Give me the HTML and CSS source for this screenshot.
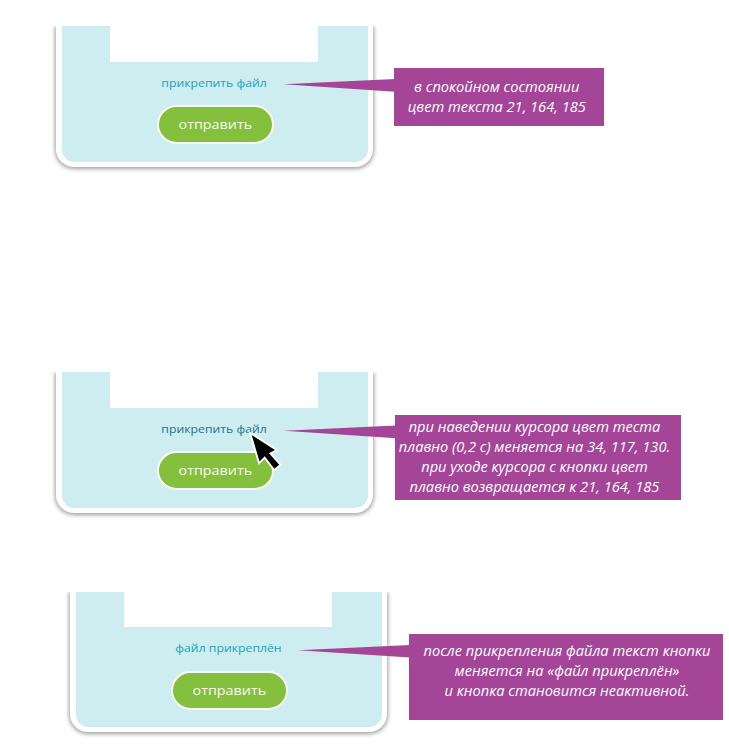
FILE: index.html
```
<!DOCTYPE html>
<html lang="ru">
<head>
<meta charset="utf-8">
<title>Прикрепить файл</title>
<link rel="stylesheet" href="styles.css">
</head>
<body>
<main class="board">
  <section class="scene scene-idle">
    <div class="clip"><div class="card">
      <div class="field"></div>
      <a class="attach"><span>прикрепить файл</span></a>
      <button class="send"><span>отправить</span></button>
    </div></div>
    <div class="note">
      <svg class="tail" width="112" height="14" viewBox="0 0 112 14"><path d="M0 6.3 112 1V13.7Z"/></svg>
      <p>в спокойном состоянии</p>
      <p>цвет текста 21, 164, 185</p>
    </div>
  </section>
  <section class="scene scene-hover">
    <div class="clip"><div class="card">
      <div class="field"></div>
      <a class="attach"><span>прикрепить файл</span></a>
      <button class="send"><span>отправить</span></button>
    </div></div>
    <svg class="cursor" width="36" height="42" viewBox="0 0 36 42"><path d="M2.7 3 26 18 20 21.3 30.3 32.7 25.3 36.7 15.8 24.3 10.5 29.5Z"/></svg>
    <div class="note">
      <svg class="tail" width="112" height="14" viewBox="0 0 112 14"><path d="M0 5.8 112 .6V13.2Z"/></svg>
      <p>при наведении курсора цвет теста</p>
      <p>плавно (0,2 с) меняется на 34, 117, 130.</p>
      <p>при уходе курсора с кнопки цвет</p>
      <p>плавно возвращается к 21, 164, 185</p>
    </div>
  </section>
  <section class="scene scene-done">
    <div class="clip"><div class="card">
      <div class="field"></div>
      <a class="attach"><span>файл прикреплён</span></a>
      <button class="send"><span>отправить</span></button>
    </div></div>
    <div class="note">
      <svg class="tail" width="112" height="14" viewBox="0 0 112 14"><path d="M0 6.3 112 1V13.5Z"/></svg>
      <p>после прикрепления файла текст кнопки</p>
      <p>меняется на «файл прикреплён»</p>
      <p>и кнопка становится неактивной.</p>
    </div>
  </section>
</main>
</body>
</html>
```
FILE: styles.css
```
* { box-sizing: border-box; }
body { margin: 0; background: #fff; overflow: hidden; }
p { margin: 0; }
.board {
  display: grid;
  grid-template-rows: 346px 220px 156px;
  padding-top: 26px;
  width: 729px;
  height: 748px;
}
.scene {
  position: relative;
  display: flex;
  align-items: flex-start;
  padding-left: 52px;
}
.scene-done { padding-left: 66px; }
.clip {
  flex: none;
  width: 326px;
  height: 150px;
  padding: 0 4px;
  overflow: hidden;
}
.card {
  display: flex;
  flex-direction: column;
  align-items: center;
  width: 317px;
  height: 141px;
  background: #ceedf0;
  border: solid #fff;
  border-width: 0 5px 5px 6px;
  border-radius: 0 0 18px 18px;
  box-shadow: 0 1px 4px 1px rgba(0, 0, 0, .38);
}
.scene-done .card { height: 140px; }
.field {
  flex: none;
  width: 208px;
  height: 36px;
  margin-right: 2px;
  background: #fff;
}
.scene-done .field { height: 35px; }
.attach {
  margin: 12px 1px 0 0;
  font: 11.4px/18px "Open Sans", sans-serif;
  color: #15a4b9;
  white-space: nowrap;
}
/* Widened letterforms of the form controls */
.attach span { display: inline-block; transform: scaleX(1.075); }
.send span { display: inline-block; transform: scaleX(1.07); }
.scene-hover .attach { color: #227582; }
.scene-done .attach { margin-right: 2px; }
.send {
  flex: none;
  width: 117px;
  height: 39px;
  margin: 13px 0 0;
  padding: 0;
  border: 2px solid #f5fcf3;
  border-radius: 20px;
  background: #84bf3e;
  color: #f7fcef;
  font: 13.4px/33px "Open Sans", sans-serif;
}
.scene-done .send { margin-top: 14px; }
.note {
  position: relative;
  flex: none;
  background: #a44597;
  color: #fff;
  text-align: center;
  white-space: nowrap;
  font: italic 14.63px/20px "Open Sans", sans-serif;
}
.scene-idle .note { width: 210.5px; height: 58px; margin: 42px 0 0 15.5px; padding: 8px 4px 0 0; }
.scene-hover .note { width: 286px; height: 85px; margin: 43px 0 0 17px; padding: 1px 7px 0 0; }
.scene-done .note { width: 314px; height: 85.5px; margin: 42.3px 0 0 17px; padding: 6px 0 0 2px; }
.tail {
  position: absolute;
  right: 100%;
  top: 10px;
  margin-right: -1px;
  fill: #a44597;
}
.cursor {
  position: absolute;
  left: 249px;
  top: 60px;
  fill: #000;
  stroke: #fff;
  stroke-width: 3.6;
  paint-order: stroke;
}
```
